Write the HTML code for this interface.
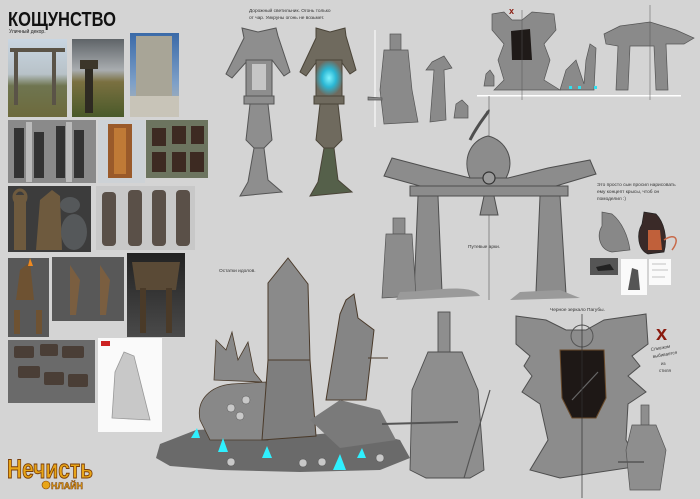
<!DOCTYPE html>
<html><head><meta charset="utf-8"><style>
html,body{margin:0;padding:0;background:#d4d4d4;width:700px;height:499px;overflow:hidden}
svg{display:block}
text{font-family:"Liberation Sans","Noto Sans CJK SC",sans-serif}
</style></head><body>
<svg width="700" height="499" viewBox="0 0 700 499" xmlns="http://www.w3.org/2000/svg">
<defs>
<linearGradient id="sky1" x1="0" y1="0" x2="0" y2="1"><stop offset="0" stop-color="#c9d6e2"/><stop offset=".45" stop-color="#b8c2c8"/><stop offset=".6" stop-color="#6f7550"/><stop offset="1" stop-color="#6d6a3c"/></linearGradient>
<linearGradient id="sky2" x1="0" y1="0" x2="0" y2="1"><stop offset="0" stop-color="#5f6468"/><stop offset=".4" stop-color="#a9adb0"/><stop offset=".55" stop-color="#7a7040"/><stop offset="1" stop-color="#4a5a2a"/></linearGradient>
<linearGradient id="sky3" x1="0" y1="0" x2="0" y2="1"><stop offset="0" stop-color="#3a6aa8"/><stop offset=".6" stop-color="#7ea0c8"/><stop offset="1" stop-color="#bbb8ae"/></linearGradient>
<linearGradient id="dk" x1="0" y1="0" x2="0" y2="1"><stop offset="0" stop-color="#222"/><stop offset="1" stop-color="#4a4a4a"/></linearGradient>
<radialGradient id="glow"><stop offset="0" stop-color="#7ff4ff"/><stop offset=".5" stop-color="#2bb7d4"/><stop offset="1" stop-color="#2bb7d4" stop-opacity="0"/></radialGradient>
</defs>
<rect width="700" height="499" fill="#d4d4d4"/>

<!-- title -->
<text x="8" y="26" font-size="20" font-weight="bold" fill="#111" textLength="108" lengthAdjust="spacingAndGlyphs" font-family="Liberation Serif">КОЩУНСТВО</text>
<text x="9" y="33" font-size="5" fill="#222">Уличный декор.</text>

<!-- reference photos -->
<rect x="8" y="39" width="59" height="78" fill="url(#sky1)"/>
<rect x="14" y="50" width="4" height="55" fill="#5a5347"/><rect x="52" y="50" width="4" height="55" fill="#5a5347"/><rect x="10" y="48" width="55" height="4" fill="#5a5347"/>
<rect x="72" y="39" width="52" height="78" fill="url(#sky2)"/>
<rect x="85" y="65" width="8" height="48" fill="#2e2a22"/><rect x="80" y="60" width="18" height="9" fill="#3c362a"/>
<rect x="130" y="33" width="49" height="84" fill="url(#sky3)"/>
<rect x="136" y="36" width="36" height="60" fill="#a8a597"/><rect x="130" y="96" width="49" height="21" fill="#c8c4b8"/>
<rect x="8" y="120" width="88" height="63" fill="#8a8a8a"/>
<g fill="#333"><rect x="14" y="128" width="10" height="50"/><rect x="34" y="132" width="10" height="46"/><rect x="56" y="126" width="9" height="52"/><rect x="74" y="130" width="10" height="48"/></g>
<g fill="#ddd" opacity=".6"><rect x="26" y="122" width="6" height="60"/><rect x="66" y="122" width="6" height="60"/></g>
<rect x="98" y="120" width="47" height="63" fill="#cdd2d6"/>
<rect x="108" y="124" width="24" height="54" fill="#9a5a2a"/><rect x="114" y="128" width="12" height="46" fill="#c07a36"/>
<rect x="146" y="120" width="62" height="58" fill="#6c745f"/>
<g fill="#3d2a22"><rect x="152" y="128" width="14" height="18"/><rect x="172" y="126" width="14" height="18"/><rect x="191" y="126" width="13" height="18"/><rect x="152" y="152" width="14" height="20"/><rect x="172" y="152" width="14" height="20"/><rect x="190" y="152" width="14" height="20"/></g>
<rect x="8" y="186" width="83" height="66" fill="#3c3c3c"/>
<g fill="#6e5a3e"><rect x="14" y="195" width="12" height="55"/><ellipse cx="20" cy="197" rx="6" ry="7" fill="none" stroke="#6e5a3e" stroke-width="3"/><path d="M36 250 L40 200 L52 190 L60 196 L62 250Z"/></g>
<ellipse cx="74" cy="232" rx="13" ry="18" fill="#55585a"/><ellipse cx="70" cy="205" rx="10" ry="8" fill="#55585a"/>
<rect x="96" y="186" width="99" height="64" fill="#c8c8c8"/>
<g fill="#5a5048"><rect x="102" y="192" width="14" height="54" rx="4"/><rect x="128" y="190" width="14" height="56" rx="4"/><rect x="152" y="190" width="14" height="56" rx="4"/><rect x="176" y="190" width="14" height="56" rx="4"/></g>
<rect x="8" y="258" width="41" height="79" fill="#585858"/>
<path d="M16 300 L20 270 L30 262 L34 300Z" fill="#6e5232"/><path d="M28 266 L30 258 L33 266Z" fill="#f08a20"/>
<rect x="14" y="310" width="6" height="24" fill="#6e5232"/><rect x="36" y="310" width="6" height="24" fill="#6e5232"/>
<rect x="52" y="257" width="72" height="64" fill="#585858"/>
<path d="M70 265 L80 280 L76 315 L70 315Z M100 265 L110 280 L106 315 L100 315Z" fill="#7a5e40"/>
<rect x="127" y="253" width="58" height="84" fill="url(#dk)"/>
<path d="M132 262 L180 262 L176 290 L136 290Z" fill="#5a4a36"/><rect x="140" y="288" width="6" height="45" fill="#4a3a28"/><rect x="166" y="288" width="6" height="45" fill="#4a3a28"/>
<rect x="8" y="340" width="87" height="63" fill="#6a6a6a"/>
<g fill="#4a3e36"><rect x="14" y="346" width="20" height="12" rx="2"/><rect x="40" y="344" width="18" height="12" rx="2"/><rect x="62" y="346" width="22" height="12" rx="2"/><rect x="18" y="366" width="22" height="12" rx="2"/><rect x="44" y="372" width="20" height="13" rx="2"/><rect x="68" y="374" width="20" height="13" rx="2"/></g>
<rect x="98" y="338" width="64" height="94" fill="#fafafa"/>
<path d="M112 418 L115 372 L124 352 L134 356 L140 380 L150 420Z" fill="#c8c8c8" stroke="#999" stroke-width=".8"/>
<rect x="101" y="341" width="9" height="5" fill="#c22"/>

<!-- logo -->
<text x="7" y="478" font-size="27" font-weight="bold" fill="#e8a518" stroke="#7a3e08" stroke-width="1" font-family="Liberation Serif" textLength="86" lengthAdjust="spacingAndGlyphs">Нечисть</text>
<circle cx="46" cy="485" r="4" fill="#e8a518" stroke="#7a3e08" stroke-width=".6"/>
<text x="51" y="489" font-size="9" font-weight="bold" fill="#e8a518" stroke="#7a3e08" stroke-width=".5" textLength="32" lengthAdjust="spacingAndGlyphs">НЛАЙН</text>

<!-- lamp texts -->
<text x="249" y="12" font-size="4.8" fill="#333">Дорожный светильник. Огонь только</text>
<text x="249" y="19" font-size="4.8" fill="#333">от чар. Уикруны огонь не возьмет.</text>

<!-- left lamp -->
<g fill="#8e8e8e" stroke="#555" stroke-width="1">
<path d="M242 28 L258 32 L276 28 L278 36 L290 72 L284 76 L272 60 L248 60 L232 78 L226 74 L244 38Z"/>
<rect x="246" y="60" width="26" height="36"/>
<rect x="244" y="96" width="30" height="8"/>
<path d="M250 104 L268 104 L272 140 L264 148 L254 148 L246 140Z"/>
<path d="M254 148 L264 148 L268 180 L282 192 L240 196 L248 182Z"/>
</g>
<rect x="252" y="64" width="14" height="26" fill="#c6c6c6"/>
<!-- right lamp -->
<g fill="#6f6a5e" stroke="#4a4438" stroke-width="1">
<path d="M316 28 L330 32 L345 28 L346 36 L356 70 L350 74 L340 60 L318 60 L306 76 L300 72 L316 38Z"/>
<rect x="316" y="60" width="26" height="36"/>
<rect x="314" y="96" width="30" height="8"/>
<path d="M320 104 L338 104 L342 140 L334 148 L324 148 L316 140Z"/>
<path d="M324 148 L334 148 L338 180 L352 192 L310 196 L318 182Z" fill="#55604a"/>
</g>
<ellipse cx="329" cy="78" rx="14" ry="18" fill="url(#glow)"/>

<!-- top right row -->
<line x1="375" y1="30" x2="375" y2="127" stroke="#fff" stroke-width="1"/>
<g fill="#8a8a8a" stroke="#555" stroke-width=".7">
<rect x="390" y="34" width="11" height="16"/>
<path d="M384 50 L408 50 L412 90 L418 122 L384 124 L380 90Z"/>
<path d="M368 97 L382 98 L382 100 L368 100Z"/>
<path d="M432 62 L444 56 L452 68 L444 70 L446 120 L430 122 L434 70 L426 70Z"/>
<path d="M456 104 L462 100 L468 106 L468 118 L454 118Z"/>
<path d="M486 74 L490 70 L494 76 L494 86 L484 86Z"/>
<path d="M492 14 L504 12 L512 20 L522 20 L532 12 L554 14 L556 30 L544 44 L550 60 L544 80 L560 90 L494 90 L504 80 L498 60 L504 44 L492 30Z"/>
<path d="M560 90 L566 70 L576 60 L584 84 L586 60 L590 44 L596 48 L594 90Z"/>
<path d="M604 34 L620 26 L650 22 L676 30 L694 38 L684 44 L666 44 L668 90 L656 90 L654 46 L630 46 L628 90 L616 90 L618 46 L606 44Z"/>
</g>
<path d="M511 31 L530 29 L532 60 L512 60Z" fill="#1f1a18"/>
<text x="509" y="14" font-size="9" fill="#8a1a0e" font-weight="bold">x</text>
<rect x="477" y="95" width="204" height="1.5" fill="#fff"/>
<line x1="522" y1="10" x2="522" y2="100" stroke="#555" stroke-width=".5"/>
<line x1="650" y1="5" x2="650" y2="100" stroke="#555" stroke-width=".5"/>
<g fill="#2fe0f0"><rect x="569" y="86" width="3" height="3"/><rect x="578" y="86" width="3" height="3"/><rect x="594" y="86" width="3" height="3"/></g>

<!-- big gate -->
<line x1="489" y1="96" x2="489" y2="300" stroke="#555" stroke-width=".6"/>
<g fill="#8c8c8c" stroke="#4e4e4e" stroke-width="1">
<path d="M488 136 C 470 140 462 160 470 178 L506 178 C 516 160 506 140 488 136Z"/>
<path d="M392 158 L430 168 L470 178 L508 178 L548 168 L590 160 L596 174 L556 186 L420 186 L384 176Z"/>
<rect x="410" y="186" width="158" height="10"/>
<path d="M418 196 L438 196 L442 292 L414 294Z"/>
<path d="M540 196 L560 196 L566 294 L536 292Z"/>
<path d="M484 196 L494 196 L498 215 L480 215Z"/>
</g>
<path d="M470 140 C 480 120 490 112 488 110" stroke="#4e4e4e" stroke-width="3" fill="none"/>
<circle cx="489" cy="178" r="6" fill="#9a9a9a" stroke="#333" stroke-width="1.2"/>
<text x="468" y="248" font-size="4.8" fill="#333">Путевые арки.</text>
<g fill="#8c8c8c" stroke="#555" stroke-width=".7">
<rect x="393" y="218" width="12" height="16"/>
<path d="M386 234 L412 234 L416 296 L382 298Z"/>
</g>
<path d="M400 292 C 430 292 470 282 480 296 L396 300Z M520 292 L560 290 L580 298 L510 300Z" fill="#9a9a9a"/>

<!-- rat note -->
<text x="597" y="186" font-size="4.8" fill="#333">Это просто сын просил нарисовать</text>
<text x="597" y="193" font-size="4.8" fill="#333">ему концепт крысы, чтоб он</text>
<text x="597" y="200" font-size="4.8" fill="#333">помоделил :)</text>
<path d="M602 226 C 596 236 600 250 612 252 L630 250 C 628 236 622 222 612 214 L602 212Z" fill="#888" stroke="#555" stroke-width=".7"/>
<path d="M642 224 C 636 234 638 250 648 254 L664 252 C 668 238 664 222 656 214 L644 212Z" fill="#3a2a28" stroke="#222" stroke-width=".7"/>
<path d="M648 230 L660 230 L662 250 L648 250Z" fill="#c0603a"/>
<path d="M664 240 C 676 232 680 240 672 250" stroke="#c86a4a" stroke-width="1.5" fill="none"/>
<rect x="590" y="258" width="28" height="17" fill="#555"/>
<path d="M596 267 L610 264 L614 270 L598 271Z" fill="#222"/>
<rect x="621" y="259" width="26" height="36" fill="#fafafa"/>
<path d="M628 290 L632 268 L638 270 L640 290Z" fill="#555"/>
<rect x="649" y="259" width="22" height="26" fill="#fafafa"/>
<g stroke="#888" stroke-width=".5"><line x1="652" y1="264" x2="666" y2="264"/><line x1="652" y1="270" x2="668" y2="270"/><line x1="652" y1="277" x2="665" y2="277"/></g>

<!-- idols -->
<text x="219" y="272" font-size="4.8" fill="#333">Остатки идолов.</text>
<path d="M160 444 L196 430 L240 428 L300 436 L360 430 L400 440 L410 458 L380 470 L300 472 L220 470 L170 466 L156 458Z" fill="#6a6a6a"/>
<path d="M200 420 C 196 400 210 386 232 384 L266 382 L268 440 L210 440Z" fill="#888" stroke="#4a3a2a" stroke-width=".8"/>
<path d="M214 380 L216 340 L226 350 L232 332 L238 360 L248 342 L254 372 L262 382Z" fill="#888" stroke="#4a3a2a" stroke-width=".8"/>
<path d="M268 283 L288 258 L308 284 L310 360 L268 360Z" fill="#8a8a8a" stroke="#4a3a2a" stroke-width="1"/>
<path d="M268 360 L310 360 L316 436 L262 440Z" fill="#7e7e7e" stroke="#4a3a2a" stroke-width="1"/>
<path d="M326 400 L340 314 L346 300 L354 294 L358 318 L374 330 L366 400Z" fill="#858585" stroke="#4a3a2a" stroke-width="1"/>
<path d="M310 420 L340 400 L380 410 L396 440 L340 448Z" fill="#7a7a7a"/>
<line x1="368" y1="358" x2="388" y2="358" stroke="#4a3a2a" stroke-width="1"/>
<g fill="#c8c8c8" stroke="#555" stroke-width=".5"><circle cx="231" cy="408" r="4"/><circle cx="246" cy="400" r="4"/><circle cx="240" cy="416" r="4"/><circle cx="231" cy="462" r="4"/><circle cx="303" cy="463" r="4"/><circle cx="322" cy="462" r="4"/><circle cx="380" cy="458" r="4"/></g>
<g fill="#2ff0ff"><path d="M191 438 L197 428 L200 438Z"/><path d="M218 452 L223 438 L228 452Z"/><path d="M262 458 L267 446 L272 458Z"/><path d="M333 470 L340 454 L346 470Z"/><path d="M357 458 L362 448 L366 458Z"/></g>

<!-- big character -->
<g fill="#8e8e8e" stroke="#4e4e4e" stroke-width=".9">
<rect x="438" y="312" width="12" height="40"/>
<path d="M428 352 L462 352 L478 390 L484 470 L470 478 L426 478 L410 470 L412 390Z"/>
</g>
<line x1="382" y1="424" x2="458" y2="422" stroke="#555" stroke-width="2"/>
<line x1="490" y1="390" x2="464" y2="478" stroke="#555" stroke-width="1.2"/>

<!-- mirror -->
<text x="550" y="311" font-size="4.8" fill="#333">Черное зеркало Пагубы.</text>
<path d="M516 316 L546 320 L566 330 L586 330 L604 320 L646 314 L648 344 L632 356 L640 366 L628 376 L646 392 L628 404 L626 440 L640 466 L560 478 L530 470 L548 440 L540 404 L522 392 L532 376 L524 366 L530 356 L516 344Z" fill="#8c8c8c" stroke="#4e4e4e" stroke-width="1"/>
<path d="M560 350 L604 350 L606 398 L596 418 L572 418 L562 398Z" fill="#1e1816" stroke="#6a4a2a" stroke-width="1"/>
<line x1="572" y1="400" x2="598" y2="372" stroke="#666" stroke-width="1.2"/>
<circle cx="582" cy="336" r="11" fill="none" stroke="#555" stroke-width="1"/>
<line x1="582" y1="314" x2="582" y2="498" stroke="#333" stroke-width=".7"/>
<text x="656" y="340" font-size="20" fill="#8a1a0e" font-weight="bold">x</text>
<text x="651" y="351" font-size="4.5" fill="#333" transform="rotate(-10 651 351)">Слишком</text>
<text x="653" y="358" font-size="4.5" fill="#333" transform="rotate(-10 653 358)">выбивается</text>
<text x="661" y="365" font-size="4.5" fill="#333">из</text>
<text x="659" y="372" font-size="4.5" fill="#333">стиля</text>

<!-- small character -->
<g fill="#8e8e8e" stroke="#555" stroke-width=".7">
<rect x="641" y="405" width="8" height="20"/>
<path d="M632 425 L656 425 L666 450 L660 490 L630 490 L626 450Z"/>
</g>
<line x1="618" y1="462" x2="644" y2="462" stroke="#555" stroke-width="1.5"/>
</svg>
</body></html>
